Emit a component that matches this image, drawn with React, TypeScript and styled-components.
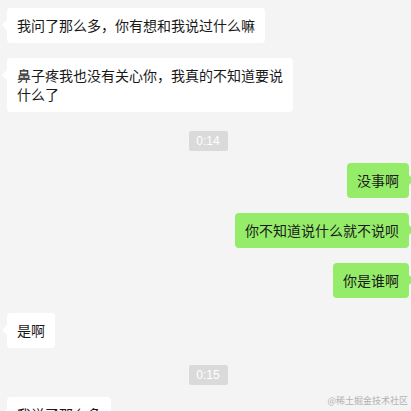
import { FC } from 'react';
import styled, { createGlobalStyle, css } from 'styled-components';

const GlobalStyle = createGlobalStyle`
  html, body {
    margin: 0;
    padding: 0;
    background: #f4f4f4;
    overflow: hidden;
  }
  body {
    font-family: "Noto Sans CJK SC", "Noto Sans", sans-serif;
  }
`

type Side = 'left' | 'right'

const Chat = styled.div`
  width: 411px;
  height: 411px;
  box-sizing: border-box;
  padding: 8px 2px 0 7px;
  display: flex;
  flex-direction: column;
  background: #f4f4f4;
  overflow: hidden;
  position: relative;
`

const Row = styled.div<{ $side: Side; $gap?: number }>`
  display: flex;
  justify-content: ${({ $side }) => ($side === 'left' ? 'flex-start' : 'flex-end')};
  margin-top: ${({ $gap = 15 }) => $gap}px;
  &:first-child {
    margin-top: 0;
  }
`

const Bubble = styled.div<{ $side: Side }>`
  position: relative;
  max-width: 286px;
  box-sizing: border-box;
  padding: 8px 10px;
  border-radius: 4px;
  font-size: 14px;
  line-height: 19px;
  color: #191919;
  background: ${({ $side }) => ($side === 'left' ? '#ffffff' : '#95ec69')};

  &::before {
    content: '';
    position: absolute;
    top: 12px;
    width: 0;
    height: 0;
    border-top: 5px solid transparent;
    border-bottom: 5px solid transparent;
    ${({ $side }) =>
      $side === 'left'
        ? css`
            left: -5px;
            border-right: 5px solid #ffffff;
          `
        : css`
            right: -5px;
            border-left: 5px solid #95ec69;
          `}
  }
`

const TimeRow = styled.div<{ $top: number; $bottom: number }>`
  display: flex;
  justify-content: center;
  margin: ${({ $top, $bottom }) => `${$top}px 0 ${$bottom}px`};
`

const TimePill = styled.span`
  display: inline-block;
  width: 39px;
  height: 20px;
  line-height: 20px;
  text-align: center;
  border-radius: 2px;
  background: #dadada;
  color: #ffffff;
  font-family: "Liberation Sans", Arial, sans-serif;
  font-size: 12px;
`

const Watermark = styled.div`
  position: absolute;
  right: 3px;
  bottom: 5px;
  font-size: 9px;
  line-height: 11px;
  color: #b2b2b2;
  font-family: "Noto Sans CJK SC", sans-serif;
`

type Item =
  | { kind: 'msg'; side: Side; text: string; gap?: number }
  | { kind: 'time'; text: string; top: number; bottom: number }

const items: Item[] = [
  { kind: 'msg', side: 'left', text: '我问了那么多，你有想和我说过什么嘛' },
  { kind: 'msg', side: 'left', text: '鼻子疼我也没有关心你，我真的不知道要说什么了' },
  { kind: 'time', text: '0:14', top: 19, bottom: 0 },
  { kind: 'msg', side: 'right', text: '没事啊', gap: 12 },
  { kind: 'msg', side: 'right', text: '你不知道说什么就不说呗' },
  { kind: 'msg', side: 'right', text: '你是谁啊' },
  { kind: 'msg', side: 'left', text: '是啊' },
  { kind: 'time', text: '0:15', top: 17, bottom: 0 },
  { kind: 'msg', side: 'left', text: '我说了那么多', gap: 12 },
]

const App: FC = () => (
  <>
    <GlobalStyle />
    <Chat>
      {items.map((item, i) =>
        item.kind === 'time' ? (
          <TimeRow key={i} $top={item.top} $bottom={item.bottom}>
            <TimePill>{item.text}</TimePill>
          </TimeRow>
        ) : (
          <Row key={i} $side={item.side} $gap={item.gap}>
            <Bubble $side={item.side}>{item.text}</Bubble>
          </Row>
        )
      )}
      <Watermark>@稀土掘金技术社区</Watermark>
    </Chat>
  </>
)

export default App
